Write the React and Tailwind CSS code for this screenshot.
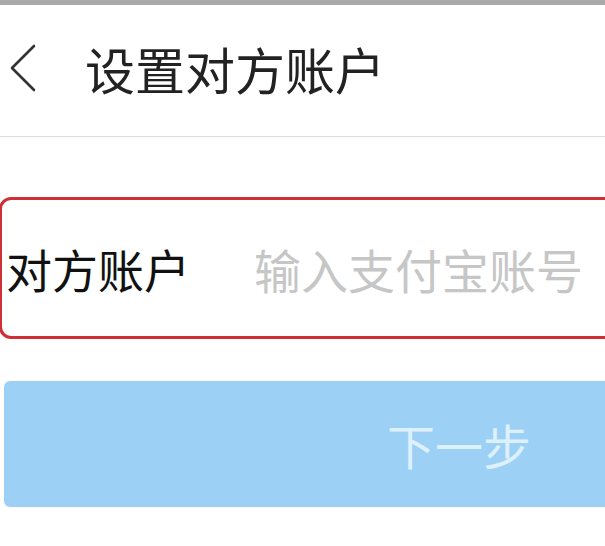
import React from 'react';

function BackIcon() {
  return (
    <svg width="30" height="48" viewBox="0 0 30 48" fill="none" className="shrink-0">
      <path d="M26 2 L4 24 L26 46" stroke="#333333" strokeWidth="2.6" strokeLinecap="round" strokeLinejoin="round" />
    </svg>
  );
}

export default function App() {
  return (
    <div className="w-[605px] h-[546px] overflow-hidden bg-white flex flex-col font-['Noto_Sans_CJK_SC','Noto_Sans',sans-serif]">
      <div className="h-[5px] bg-[#a9a9a9] shrink-0" />
      <div className="h-[132px] flex items-center pl-[8px] border-b border-[#dddddd] shrink-0">
        <div className="-mt-[6px] flex items-center">
          <BackIcon />
          <span className="ml-[47px] text-[50px] leading-none text-[#222222]">设置对方账户</span>
        </div>
      </div>

      <div className="mt-[60px] w-[1000px] h-[142px] -ml-[1px] shrink-0 border-[3px] border-[#cf3038] rounded-[12px] flex items-center pl-[4px]">
        <span className="text-[46px] leading-none text-[#111111] w-[248px] shrink-0">对方账户</span>
        <span className="text-[47px] leading-none text-[#c6c6c6]">输入支付宝账号</span>
      </div>

      <button className="mt-[42px] ml-[4px] w-[910px] h-[126px] shrink-0 bg-[#9dd0f5] rounded-[6px] flex items-center justify-center">
        <span className="text-[48px] leading-none text-[#dcf0fd]">下一步</span>
      </button>
    </div>
  );
}
